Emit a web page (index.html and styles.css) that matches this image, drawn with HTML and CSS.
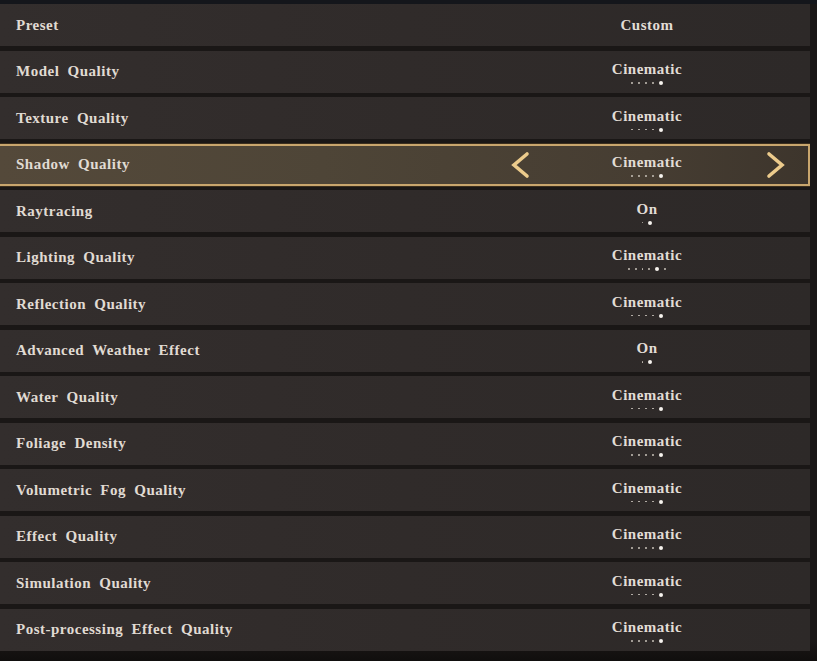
FILE: index.html
```html
<!DOCTYPE html>
<html lang="en">
<head>
<meta charset="utf-8">
<title>Graphics Settings</title>
<link rel="stylesheet" href="styles.css">
</head>
<body>
<div class="topbar"></div>
<main class="list">
  <div class="row"><span class="label">Preset</span><div class="value"><span class="text">Custom</span></div></div>
  <div class="row"><span class="label">Model Quality</span><div class="value"><span class="text">Cinematic</span><span class="dots"><i></i><i></i><i></i><i></i><b></b></span></div></div>
  <div class="row"><span class="label">Texture Quality</span><div class="value"><span class="text">Cinematic</span><span class="dots"><i></i><i></i><i></i><i></i><b></b></span></div></div>
  <div class="row active"><span class="label">Shadow Quality</span>
    <div class="value">
      <svg class="arrow left" width="22" height="28" viewBox="0 0 22 28"><path d="M18 3 L5 14 L18 25" fill="none" stroke="#eccb8c" stroke-width="3.6" stroke-linecap="round" stroke-linejoin="miter"/></svg>
      <span class="text">Cinematic</span><span class="dots"><i></i><i></i><i></i><i></i><b></b></span>
      <svg class="arrow right" width="22" height="28" viewBox="0 0 22 28"><path d="M4 3 L17 14 L4 25" fill="none" stroke="#eccb8c" stroke-width="3.6" stroke-linecap="round" stroke-linejoin="miter"/></svg>
    </div></div>
  <div class="row"><span class="label">Raytracing</span><div class="value"><span class="text">On</span><span class="dots"><i></i><b></b></span></div></div>
  <div class="row"><span class="label">Lighting Quality</span><div class="value"><span class="text">Cinematic</span><span class="dots"><i></i><i></i><i></i><i></i><b></b><i></i></span></div></div>
  <div class="row"><span class="label">Reflection Quality</span><div class="value"><span class="text">Cinematic</span><span class="dots"><i></i><i></i><i></i><i></i><b></b></span></div></div>
  <div class="row"><span class="label">Advanced Weather Effect</span><div class="value"><span class="text">On</span><span class="dots"><i></i><b></b></span></div></div>
  <div class="row"><span class="label">Water Quality</span><div class="value"><span class="text">Cinematic</span><span class="dots"><i></i><i></i><i></i><i></i><b></b></span></div></div>
  <div class="row"><span class="label">Foliage Density</span><div class="value"><span class="text">Cinematic</span><span class="dots"><i></i><i></i><i></i><i></i><b></b></span></div></div>
  <div class="row"><span class="label">Volumetric Fog Quality</span><div class="value"><span class="text">Cinematic</span><span class="dots"><i></i><i></i><i></i><i></i><b></b></span></div></div>
  <div class="row"><span class="label">Effect Quality</span><div class="value"><span class="text">Cinematic</span><span class="dots"><i></i><i></i><i></i><i></i><b></b></span></div></div>
  <div class="row"><span class="label">Simulation Quality</span><div class="value"><span class="text">Cinematic</span><span class="dots"><i></i><i></i><i></i><i></i><b></b></span></div></div>
  <div class="row"><span class="label">Post-processing Effect Quality</span><div class="value"><span class="text">Cinematic</span><span class="dots"><i></i><i></i><i></i><i></i><b></b></span></div></div>
</main>
</body>
</html>
```
FILE: styles.css
```css
html, body {
  margin: 0;
  padding: 0;
}
body {
  width: 817px;
  height: 661px;
  overflow: hidden;
  background: linear-gradient(180deg, #1a1716 0%, #1a1716 97%, #100e0d 100%);
  font-family: "Liberation Serif", "DejaVu Serif", serif;
  color: #e2ddd6;
}
.topbar {
  height: 4px;
  background: #14161b;
}
.list {
  display: flex;
  flex-direction: column;
  gap: 4.5px;
  width: 810px;
  padding-bottom: 10px;
}
.row {
  position: relative;
  height: 42px;
  display: flex;
  align-items: center;
  background: linear-gradient(90deg, #332e2d 0%, #302b2a 50%, #2d2928 100%);
  box-sizing: border-box;
}
.label {
  padding-left: 16px;
  font-size: 15px;
  font-weight: bold;
  word-spacing: 4px;
  letter-spacing: 0.5px;
  flex: 1;
  color: #e0dbd3;
}
.value {
  position: absolute;
  left: 547px;
  width: 200px;
  top: 0;
  bottom: 0;
  padding-top: 4px;
  box-sizing: border-box;
  display: flex;
  flex-direction: column;
  align-items: center;
  justify-content: center;
}
.text {
  font-size: 15px;
  font-weight: bold;
  letter-spacing: 0.5px;
  line-height: 17px;
}
.text:only-child {
  margin-top: -4px;
}
.dots {
  display: flex;
  align-items: center;
  gap: 5px;
  height: 6px;
  margin-top: 2px;
}
.dots i {
  width: 1.8px;
  height: 1.8px;
  background: #c4beb5;
  border-radius: 50%;
}
.dots b {
  width: 4px;
  height: 4px;
  background: #f6f3ee;
  border-radius: 50%;
}
.row.active {
  background: linear-gradient(90deg, #54493a 0%, #4e4537 40%, #463d32 80%, #3d352c 100%);
  border-top: 2px solid #c9a66d;
  border-bottom: 2px solid #c9a66d;
  border-right: 2px solid #c9a66d;
  box-shadow: 0 -1px 0 #3a2e1e, 0 1px 0 #3a2e1e;
}
.arrow {
  position: absolute;
  top: 5px;
}
.arrow.left {
  left: -38px;
}
.arrow.right {
  left: 218px;
}
```
